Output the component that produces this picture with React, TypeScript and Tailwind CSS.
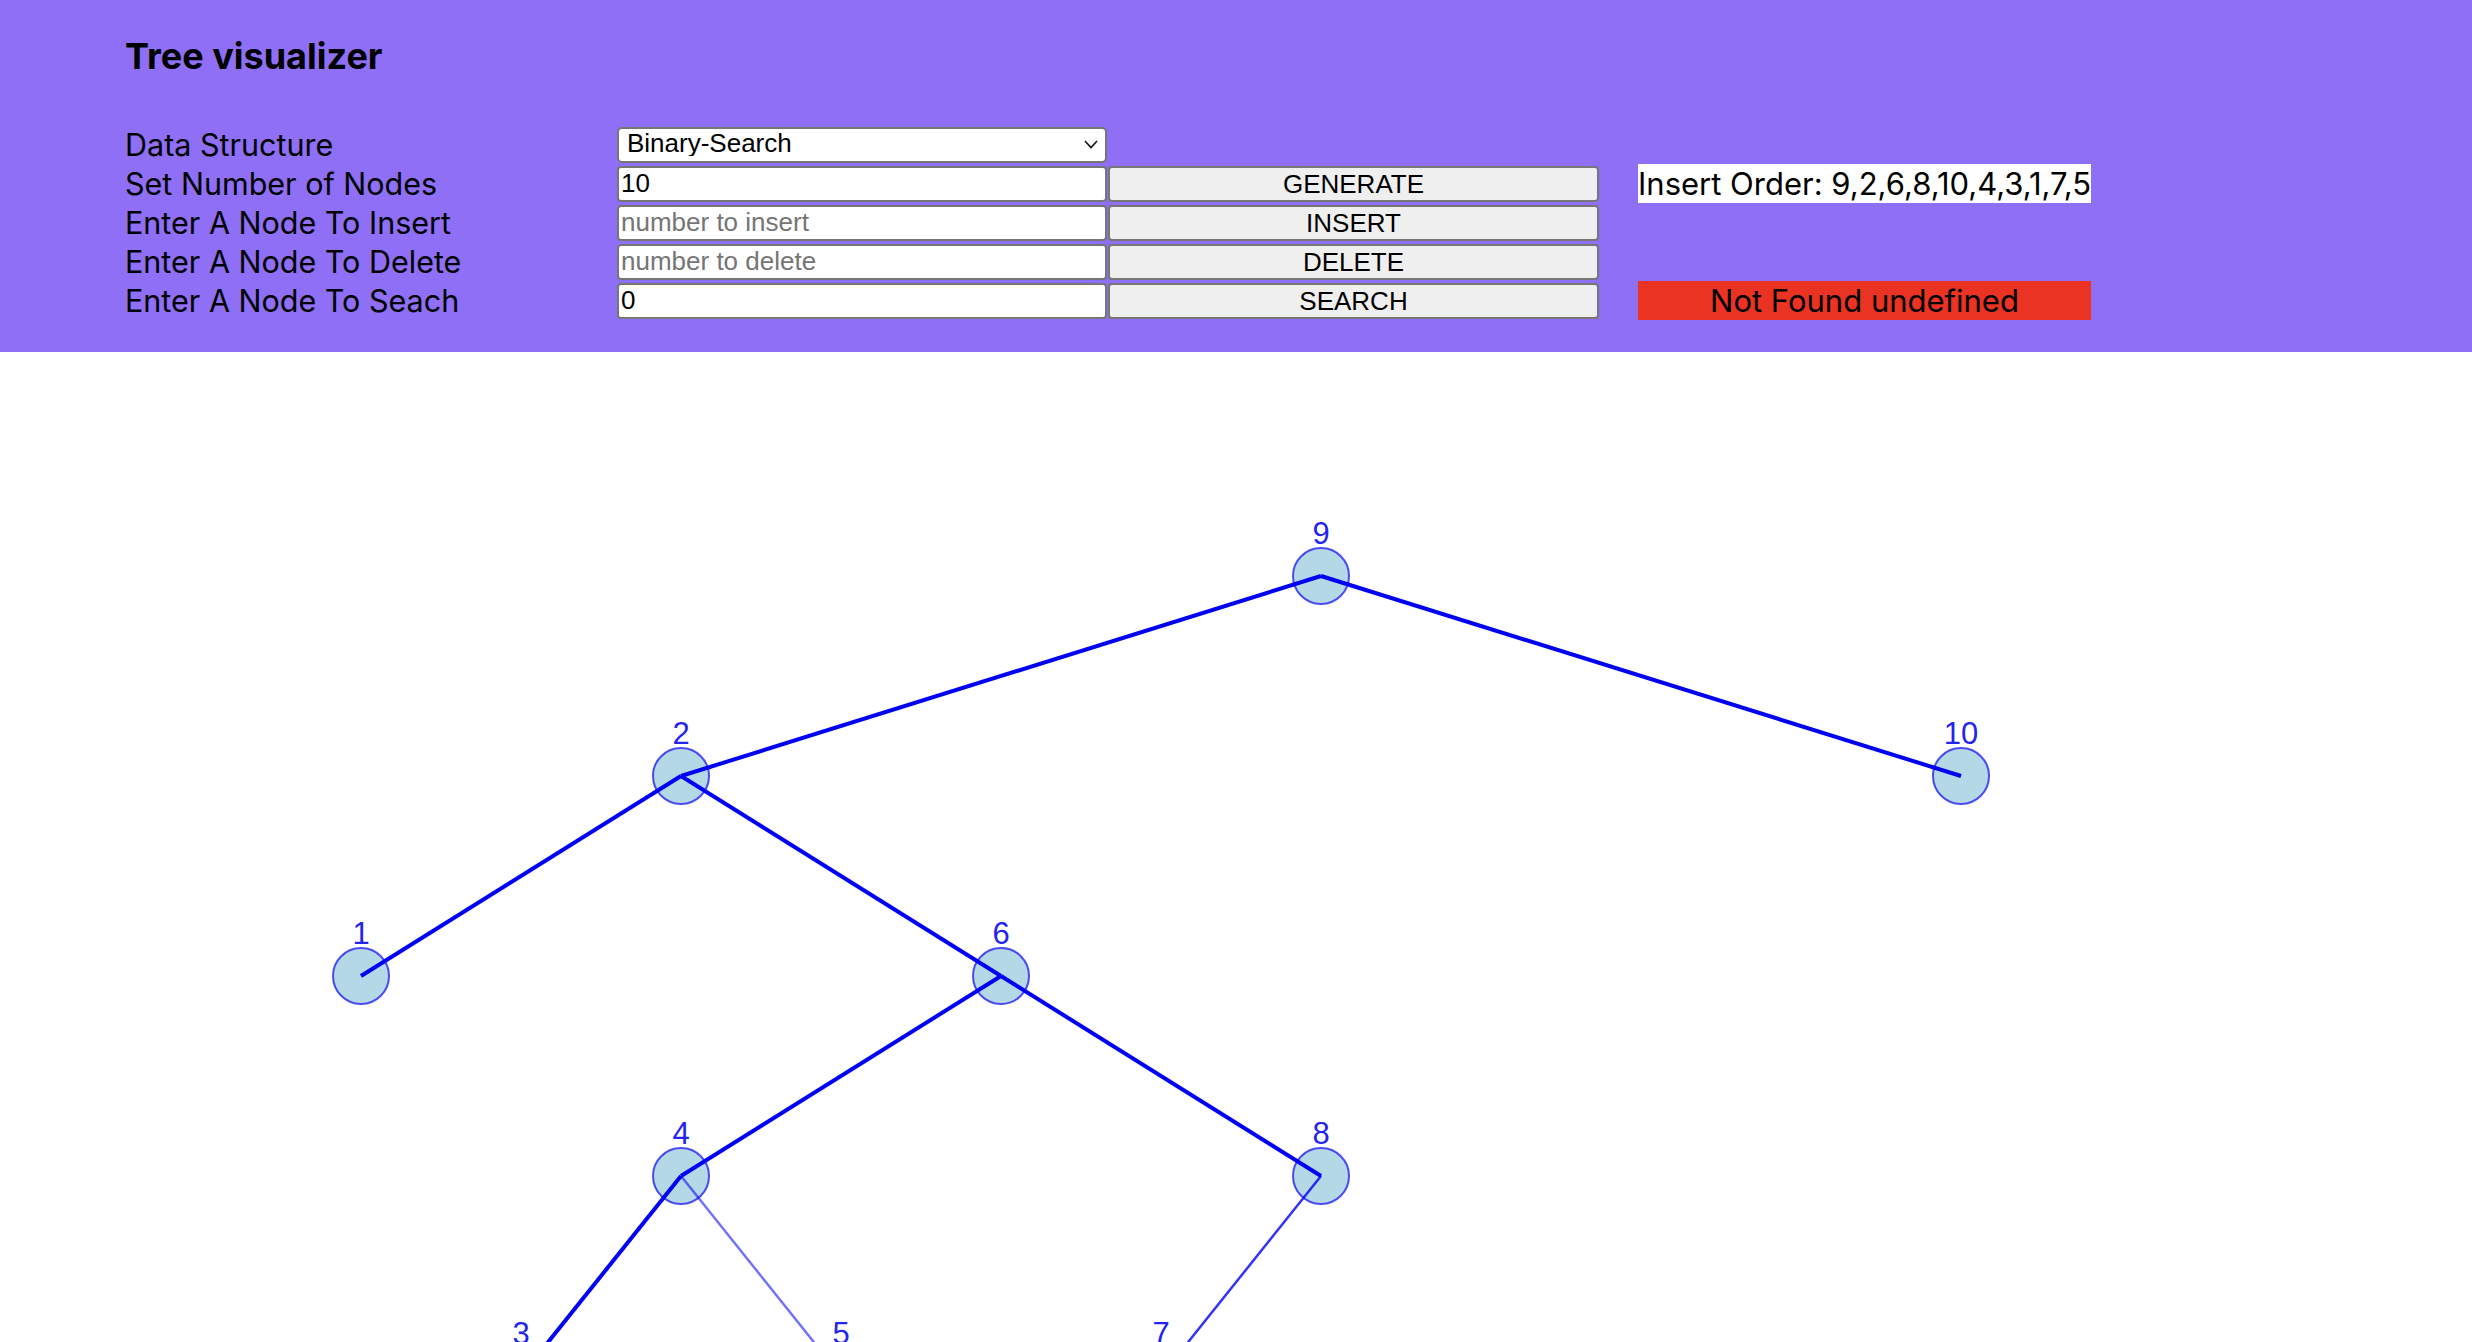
import { useState, type ChangeEvent } from "react";

type TreeNode = { value: number; x: number; y: number };
type Edge = { from: number; to: number; width: number; opacity: number };

// posições em pixels dentro do svg (o header ocupa 352px)
const nodes: TreeNode[] = [
	{ value: 9, x: 1321, y: 224 },
	{ value: 2, x: 681, y: 424 },
	{ value: 10, x: 1961, y: 424 },
	{ value: 1, x: 361, y: 624 },
	{ value: 6, x: 1001, y: 624 },
	{ value: 4, x: 681, y: 824 },
	{ value: 8, x: 1321, y: 824 },
	{ value: 3, x: 521, y: 1024 },
	{ value: 5, x: 841, y: 1024 },
	{ value: 7, x: 1161, y: 1024 },
];

const edges: Edge[] = [
	{ from: 9, to: 2, width: 4, opacity: 1 },
	{ from: 9, to: 10, width: 4, opacity: 1 },
	{ from: 2, to: 1, width: 4, opacity: 1 },
	{ from: 2, to: 6, width: 4, opacity: 1 },
	{ from: 6, to: 4, width: 4, opacity: 1 },
	{ from: 6, to: 8, width: 4, opacity: 1 },
	{ from: 4, to: 3, width: 4, opacity: 1 },
	{ from: 4, to: 5, width: 2.5, opacity: 0.55 },
	{ from: 8, to: 7, width: 2.5, opacity: 0.8 },
];

function findNode(value: number) {
	return nodes.find((n) => n.value === value)!;
}

function Tree() {
	return (
		<svg width={2472} height={990} className="block">
			{nodes.map((n) => (
				<g key={n.value}>
					<circle cx={n.x} cy={n.y} r={28} fill="#b4d8e5" stroke="#4a4af2" strokeWidth={2} />
					<text
						x={n.x}
						y={n.y - 32}
						textAnchor="middle"
						fontSize={31}
						fill="#2323f2"
						fontFamily="'Liberation Sans', Arial, sans-serif">
						{n.value}
					</text>
				</g>
			))}
			{edges.map((e) => {
				const a = findNode(e.from);
				const b = findNode(e.to);
				return (
					<line
						key={`${e.from}-${e.to}`}
						x1={a.x}
						y1={a.y}
						x2={b.x}
						y2={b.y}
						stroke="#0000f5"
						strokeWidth={e.width}
						strokeOpacity={e.opacity}
					/>
				);
			})}
		</svg>
	);
}

function App() {
	const [estrutura, setEstrutura] = useState("binary");
	const [quantidade, setQuantidade] = useState("10");
	const [inserir, setInserir] = useState("");
	const [deletar, setDeletar] = useState("");
	const [buscarValor, setBuscarValor] = useState("0");

	const inputClass =
		"w-[490px] h-[36px] bg-white border-2 border-[#767676] rounded-[4px] px-[2px] text-[26px] text-black font-['Liberation_Sans',Arial,sans-serif] placeholder:text-[#757575] outline-none";
	const buttonClass =
		"w-[491px] h-[36px] bg-[#efefef] border-2 border-[#767676] rounded-[4px] text-[26px] text-black font-['Liberation_Sans',Arial,sans-serif] leading-none";
	const labelClass = "text-[30.5px] text-black leading-[39px] whitespace-nowrap";

	return (
		<div className="h-[1342px] overflow-hidden bg-white font-['Inter',sans-serif]">
			<header className="bg-[#8e6ff6] pl-[125px] pt-[34px] pb-[32px]">
				<h1 className="text-[36px] leading-[44px] font-bold text-black">Tree visualizer</h1>

				<div className="mt-[47px] grid grid-cols-[492px_491px_491px_39px_453px] auto-rows-[39px] items-center">
					<span className={labelClass}>Data Structure</span>
					<div className="relative w-[490px] h-[36px]">
						<select
							value={estrutura}
							onChange={(e: ChangeEvent<HTMLSelectElement>) => setEstrutura(e.target.value)}
							className="appearance-none w-full h-full bg-white border-2 border-[#767676] rounded-[5px] pl-[8px] pb-[3px] leading-none text-[26px] text-black font-['Liberation_Sans',Arial,sans-serif] outline-none">
							<option value="binary">Binary-Search</option>
							<option value="avl">AVL</option>
						</select>
						<svg className="absolute right-[9px] top-[13px] pointer-events-none" width="14" height="9" viewBox="0 0 14 9">
							<polyline points="1,1 7,7.5 13,1" fill="none" stroke="#111" strokeWidth="1.6" />
						</svg>
					</div>
					<div />
					<div />
					<div />

					<span className={labelClass}>Set Number of Nodes</span>
					<input
						type="text"
						className={inputClass}
						value={quantidade}
						onChange={(e: ChangeEvent<HTMLInputElement>) => setQuantidade(e.target.value)}
					/>
					<button className={buttonClass}>GENERATE</button>
					<div />
					<div className="h-full bg-white text-[31px] leading-[39px] text-black whitespace-nowrap overflow-hidden">
						Insert Order: 9,2,6,8,10,4,3,1,7,5
					</div>

					<span className={labelClass}>Enter A Node To Insert</span>
					<input
						type="text"
						placeholder="number to insert"
						className={inputClass}
						value={inserir}
						onChange={(e: ChangeEvent<HTMLInputElement>) => setInserir(e.target.value)}
					/>
					<button className={buttonClass}>INSERT</button>
					<div />
					<div />

					<span className={labelClass}>Enter A Node To Delete</span>
					<input
						type="text"
						placeholder="number to delete"
						className={inputClass}
						value={deletar}
						onChange={(e: ChangeEvent<HTMLInputElement>) => setDeletar(e.target.value)}
					/>
					<button className={buttonClass}>DELETE</button>
					<div />
					<div />

					<span className={labelClass}>Enter A Node To Seach</span>
					<input
						type="text"
						className={inputClass}
						value={buscarValor}
						onChange={(e: ChangeEvent<HTMLInputElement>) => setBuscarValor(e.target.value)}
					/>
					<button className={buttonClass}>SEARCH</button>
					<div />
					<div className="h-full bg-[#ea3323] text-[31px] leading-[39px] text-black text-center whitespace-nowrap">
						Not Found undefined
					</div>
				</div>
			</header>

			<Tree />
		</div>
	);
}

export default App;
